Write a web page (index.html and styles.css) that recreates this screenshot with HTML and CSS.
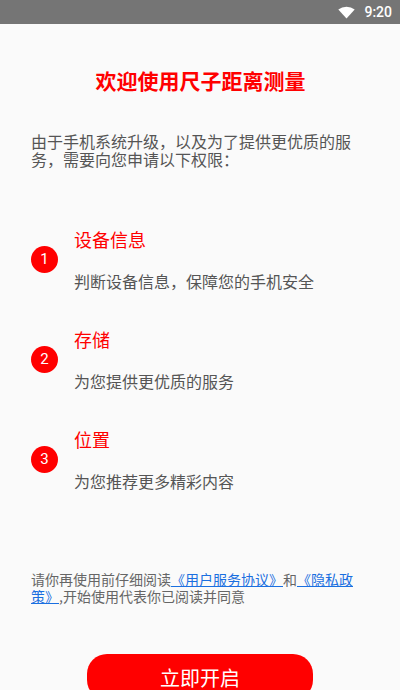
FILE: index.html
```html
<!DOCTYPE html>
<html lang="zh-CN">
<head>
  <meta charset="UTF-8">
  <meta name="viewport" content="width=device-width, initial-scale=1.0">
  <title>欢迎使用尺子距离测量</title>
  <link rel="stylesheet" href="styles.css">
</head>
<body>
  <div class="statusbar">
    <svg class="wifi" width="17" height="13" viewBox="0 0 17 13">
      <path d="M8.5 12.5 L0.3 3.6 A13 13 0 0 1 16.7 3.6 Z" fill="#fff"/>
    </svg>
    <span class="time">9:20</span>
  </div>

  <div class="page">
    <h1>欢迎使用尺子距离测量</h1>
    <p class="intro">由于手机系统升级，以及为了提供更优质的服务，需要向您申请以下权限：</p>

    <div class="perm">
      <div class="num">1</div>
      <div class="perm-text">
        <div class="perm-title">设备信息</div>
        <div class="perm-desc">判断设备信息，保障您的手机安全</div>
      </div>
    </div>
    <div class="perm">
      <div class="num">2</div>
      <div class="perm-text">
        <div class="perm-title">存储</div>
        <div class="perm-desc">为您提供更优质的服务</div>
      </div>
    </div>
    <div class="perm">
      <div class="num">3</div>
      <div class="perm-text">
        <div class="perm-title">位置</div>
        <div class="perm-desc">为您推荐更多精彩内容</div>
      </div>
    </div>

    <p class="notice">请你再使用前仔细阅读<a href="#">《用户服务协议》</a>和<a href="#">《隐私政策》</a>,开始使用代表你已阅读并同意</p>

    <div class="actions">
      <button class="start-btn">立即开启</button>
    </div>
  </div>
</body>
</html>
```

FILE: styles.css
```css
body {
  margin: 0;
  background-color: #fafafa;
  font-family: "Noto Sans CJK SC", "Noto Sans", sans-serif;
  overflow: hidden;
}
.statusbar {
  height: 24px;
  background-color: #757575;
  display: flex;
  align-items: center;
  justify-content: flex-end;
  padding-right: 8px;
  gap: 9px;
}
.wifi {
  display: block;
}
.time {
  color: #fff;
  font-family: Roboto, sans-serif;
  font-size: 14px;
  font-weight: 500;
}
.page {
  padding: 0 30px 0 31px;
}
h1 {
  margin: 42px 0 0;
  text-align: center;
  color: #f00;
  font-size: 21px;
  line-height: 28px;
  font-weight: bold;
}
.intro {
  margin: 38px 0 0;
  max-width: 330px;
  color: #555;
  font-size: 16px;
  line-height: 18px;
}
.perm {
  display: flex;
  align-items: center;
  margin-top: 35px;
}
.perm:first-of-type {
  margin-top: 59px;
}
.num {
  width: 27px;
  height: 27px;
  border-radius: 50%;
  background-color: #f00;
  color: #fff;
  font-family: Roboto, sans-serif;
  font-size: 15px;
  line-height: 27px;
  text-align: center;
  margin-right: 16px;
}
.perm-title {
  color: #f00;
  font-size: 18px;
  line-height: 24px;
}
.perm-desc {
  margin-top: 20px;
  color: #555;
  font-size: 16px;
  line-height: 21px;
}
.notice {
  margin: 79px 0 0;
  color: #666;
  font-size: 14px;
  line-height: 17px;
}
.notice a {
  color: #1a6fe0;
}
.actions {
  display: flex;
  justify-content: center;
  margin-top: 49px;
}
.start-btn {
  width: 226px;
  height: 46px;
  border: none;
  border-radius: 20px;
  background-color: #f00;
  color: #fff;
  font-family: "Noto Sans CJK SC", sans-serif;
  font-size: 20px;
  margin-left: -1px;
}
```
